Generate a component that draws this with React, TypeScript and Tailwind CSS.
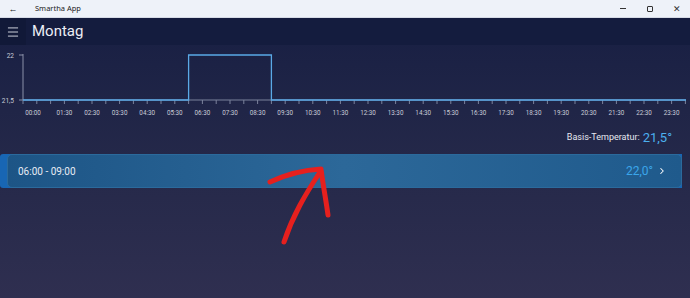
import { ChevronRight, Menu } from "lucide-react"

const STEP = 13.8
const X0 = 23

const labels = Array.from({ length: 24 }, (_, i) => {
  if (i === 0) return { text: "00:00", x: 33 }
  const h = String(i).padStart(2, "0")
  return { text: `${h}:30`, x: X0 + (i * 2 + 1) * STEP }
})

function Chart() {
  const ticks = Array.from({ length: 49 }, (_, i) => X0 + i * STEP)
  const s = X0 + 12 * STEP
  const e = X0 + 18 * STEP
  return (
    <svg width="690" height="80" className="block">
      <line x1="23" y1="9" x2="23" y2="55" stroke="#8a90a8" strokeWidth="1" />
      <line x1="19" y1="10" x2="23" y2="10" stroke="#8a90a8" strokeWidth="1" />
      <line x1="19" y1="55" x2="23" y2="55" stroke="#8a90a8" strokeWidth="1" />
      <text x="14" y="12.5" fontSize="6.5" fill="#c9ccd8" textAnchor="end">22</text>
      <text x="14" y="57.5" fontSize="6.5" fill="#c9ccd8" textAnchor="end">21,5</text>
      <line x1="23" y1="55" x2="686" y2="55" stroke="#7b829c" strokeWidth="1" />
      {ticks.map((t) => (
        <line key={t} x1={t} y1="55" x2={t} y2="59" stroke="#7b829c" strokeWidth="1" />
      ))}
      <polyline
        points={`23,55 ${s},55 ${s},10 ${e},10 ${e},55 686,55`}
        fill="none"
        stroke="#5aa9e6"
        strokeWidth="1.3"
      />
      {labels.map((l) => (
        <text key={l.text} x={l.x} y="70" fontSize="6.3" fill="#c9ccd8" textAnchor="middle">
          {l.text}
        </text>
      ))}
    </svg>
  )
}

export default function App() {
  return (
    <div
      className="relative w-[690px] h-[298px] overflow-hidden flex flex-col"
      style={{ fontFamily: 'Roboto, "Noto Sans", sans-serif' }}
    >
      {/* title bar */}
      <div
        className="h-[18px] bg-[#eef2f9] flex items-center text-[#1b1b1b] border-b border-[#d6dbe6]"
        style={{ fontFamily: '"Noto Sans", sans-serif' }}
      >
        <span className="w-[26px] text-center text-[9px] leading-none">←</span>
        <span className="ml-[9px] text-[7.5px]">Smartha App</span>
        <div className="ml-auto flex items-center h-full">
          <span className="w-[27px] flex justify-center">
            <span className="block w-[6px] h-px bg-[#333]" />
          </span>
          <span className="w-[27px] flex justify-center">
            <span className="block w-[6px] h-[6px] border border-[#333] rounded-[1px]" />
          </span>
          <span className="w-[27px] flex justify-center text-[9px] leading-none text-[#333]">✕</span>
        </div>
      </div>

      <div className="flex-1 flex flex-col bg-gradient-to-b from-[#181f43] via-[#242849] to-[#2f2f50]">
        {/* header */}
        <div className="h-[27px] bg-[#141c3e] flex items-center">
          <div className="w-[26px] h-full bg-[#111938] flex items-center justify-center">
            <Menu className="w-[14px] h-[14px] text-[#e6e8f0]" strokeWidth={1.5} />
          </div>
          <span className="ml-[6px] text-[15px] text-[#eceef5] leading-none">Montag</span>
        </div>

        <Chart />

        <div className="h-[25px] flex items-center justify-end pr-[18px] gap-[3px]">
          <span className="text-[9px] text-[#e6e8ef]">Basis-Temperatur:</span>
          <span className="text-[13px] text-[#4cb0ef]">21,5°</span>
        </div>

        <div className="mt-[4px] mr-[8px] flex h-[34px] bg-[#1866b4] rounded-l-[3px]">
          <div className="ml-[7px] flex-1 flex items-center rounded-[5px] border border-[#2b6a9c] bg-gradient-to-r from-[#1d5586] via-[#2c6899] to-[#1f5a8c] pl-[10px] pr-[14px]">
            <span className="text-[10px] text-[#e8ecf4]">06:00 - 09:00</span>
            <span className="ml-auto text-[12px] text-[#3ba6ea]">22,0°</span>
            <ChevronRight className="ml-[4px] w-[10px] h-[10px] text-white" strokeWidth={2.5} />
          </div>
        </div>
      </div>

      {/* red annotation arrow */}
      <svg className="absolute left-0 top-0 pointer-events-none" width="690" height="298">
        <path
          d="M270 182 C285 175 303 170 321 169 M321 169 C323 185 326 200 328 215 M320 172 C305 195 293 215 284 242"
          fill="none"
          stroke="#e6201e"
          strokeWidth="5"
          strokeLinecap="round"
          strokeLinejoin="round"
        />
      </svg>
    </div>
  )
}
